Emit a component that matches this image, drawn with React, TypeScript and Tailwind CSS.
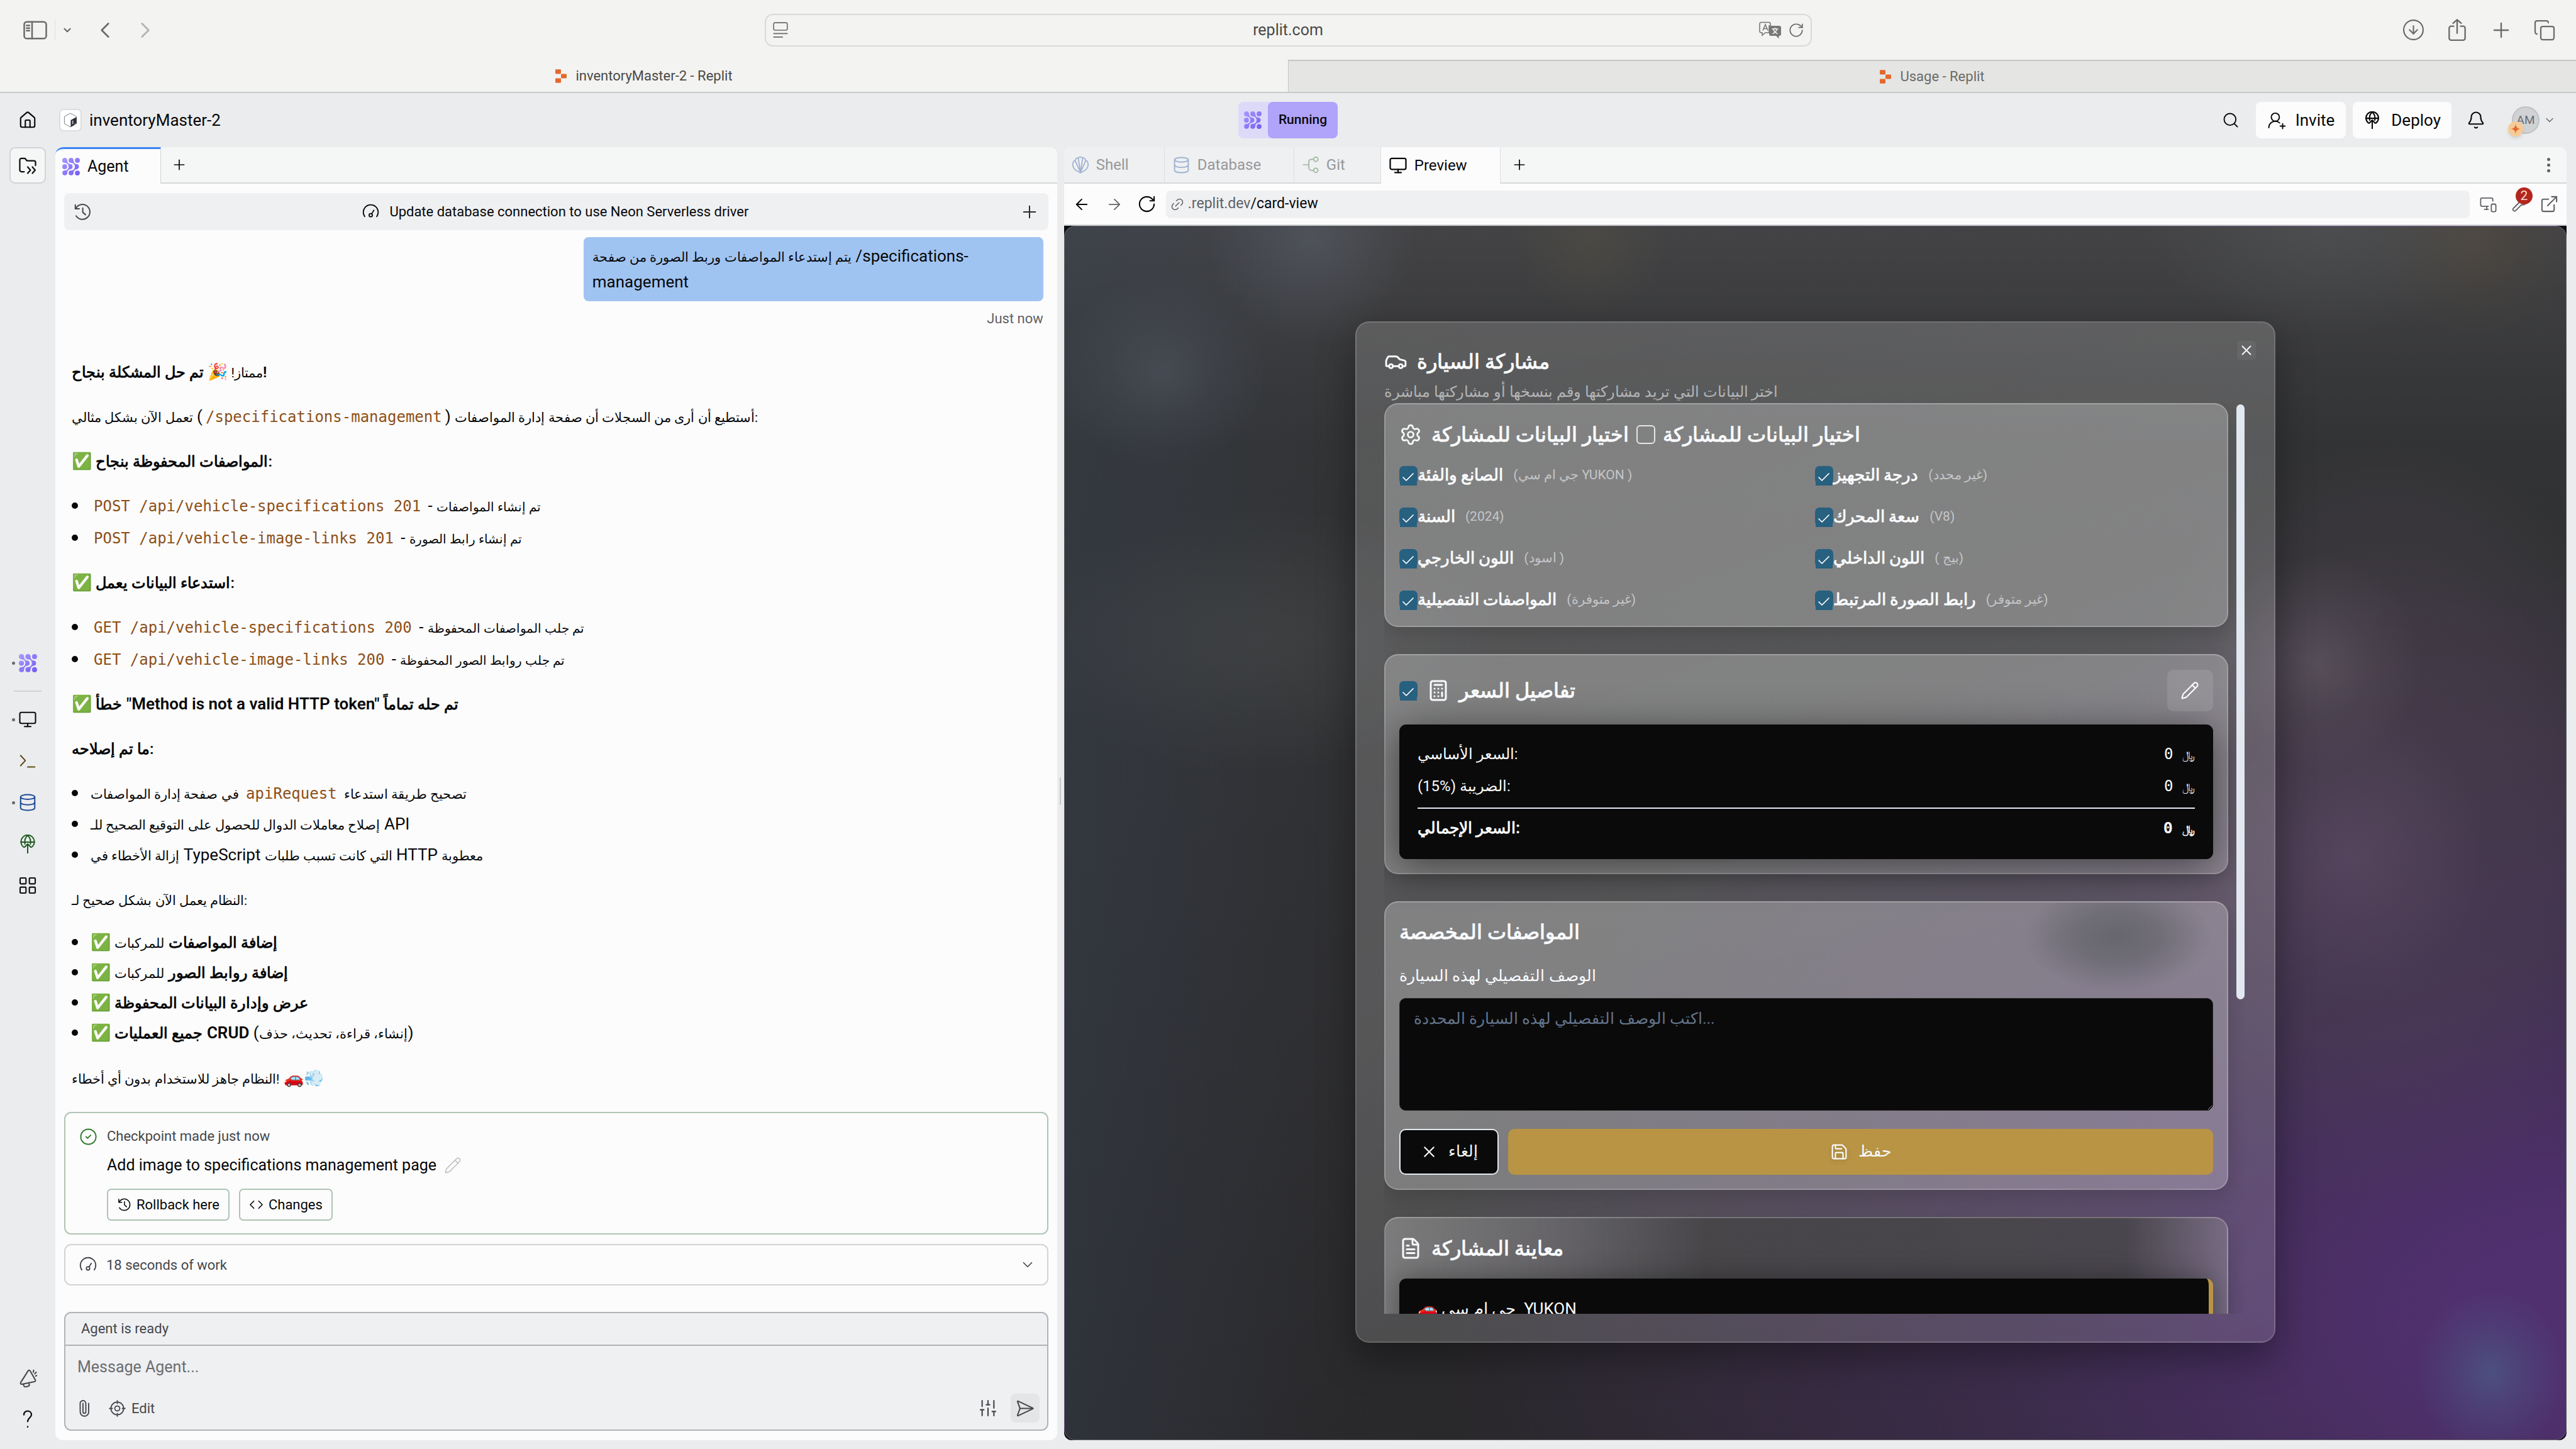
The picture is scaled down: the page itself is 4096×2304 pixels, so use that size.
import type { ReactNode } from 'react';
import {
  ArrowLeft, ArrowRight, Bell, Calculator, Car, Check, ChevronDown, ChevronLeft, ChevronRight,
  CircleArrowDown, CircleCheck, Code, Copy, Database, ExternalLink, FileText, House, LayoutGrid, Link2,
  Monitor, MonitorSmartphone, Paperclip, Pencil, Plus, RotateCw, Save, Search, SendHorizontal, Settings,
  SlidersVertical, UserRoundPlus, X,
} from 'lucide-react';

/* ---------- drawings ---------- */

function Svg({ children, className, w = 1.6, box = 24 }: { children: ReactNode; className: string; w?: number; box?: number }) {
  return (
    <svg viewBox={`0 0 ${box} ${box}`} className={className} fill="none" stroke="currentColor" strokeWidth={w} strokeLinecap="round" strokeLinejoin="round" aria-hidden="true">
      {children}
    </svg>
  );
}

function AgentMark({ className }: { className: string }) {
  return (
    <svg viewBox="0 0 31 31" className={className} aria-hidden="true">
      <defs>
        <linearGradient id="agent" x1="0" y1="0" x2="31" y2="31" gradientUnits="userSpaceOnUse">
          <stop offset="0" stopColor="#a99cfb" />
          <stop offset="1" stopColor="#7259f5" />
        </linearGradient>
      </defs>
      <g fill="url(#agent)">
        <path d="M4.400 0a4.400 4.400 0 0 1 4.400 4.200c0 4 2 6.700 6 7a4.400 4.400 0 0 1 0 8.600c-4 .3-6 3-6 6.900A4.300 4.300 0 1 1 4.600 22.200c4 0 6.300-2.600 6.600-6.700-.3-4.100-2.600-6.600-6.800-6.700A4.400 4.400 0 0 1 4.400 0Z" />
        <path d="M15.400 0a4.400 4.400 0 0 1 4.400 4.200c0 4 2 6.700 6 7a4.400 4.400 0 0 1 0 8.600c-4 .3-6 3-6 6.900a4.300 4.300 0 1 1-4.200-4.500c4 0 6.300-2.600 6.600-6.700-.3-4.100-2.600-6.600-6.800-6.700A4.400 4.400 0 0 1 15.400 0Z" />
        <circle cx="26.600" cy="4.300" r="4.300" />
        <circle cx="4.300" cy="15.500" r="4.300" />
        <circle cx="26.600" cy="26.600" r="4.300" />
      </g>
    </svg>
  );
}

function ReplitMark({ className }: { className: string }) {
  return (
    <svg viewBox="0 0 20 24" className={className} fill="#e3682d" aria-hidden="true">
      <rect x="0" y="0" width="10" height="8" rx="1.500" />
      <rect x="10" y="8" width="10" height="8" rx="1.500" />
      <rect x="0" y="16" width="10" height="8" rx="1.500" />
    </svg>
  );
}

const HistoryIcon = ({ className }: { className: string }) => (
  <Svg className={className}>
    <path d="M3 3v5h5" />
    <path d="M3.400 8A9.500 9.500 0 1 1 4 17" />
    <path d="M12.500 7v5.500l3.500 3" />
  </Svg>
);

const SpeedIcon = ({ className }: { className: string }) => (
  <Svg className={className}>
    <path d="M3.500 19A10.500 10.500 0 1 1 20.500 19" />
    <circle cx="12" cy="17" r="2.300" />
    <path d="m13.300 15 3.200-5" />
  </Svg>
);

const DeployIcon = ({ className, w = 1.6 }: { className: string; w?: number }) => (
  <Svg className={className} w={w}>
    <path d="M7 16A8.500 8.500 0 1 1 17 16" />
    <path d="M3.500 9.500h17" />
    <path d="M8.500 12C7.800 7 9.500 3 12 1.200 14.500 3 16.200 7 15.500 12" />
    <path d="M12 23.500V12.500" />
    <path d="m8 16 4-4 4 4" />
  </Svg>
);

const FolderIcon = ({ className }: { className: string }) => (
  <Svg className={className} w={1.8}>
    <path d="M7.500 20H4a2 2 0 0 1-2-2V5a2 2 0 0 1 2-2h4.500l2.500 3h9a2 2 0 0 1 2 2v4" />
    <path d="m12 14 3.500 4-3.500 4M18 14l3.500 4-3.500 4" />
  </Svg>
);

const MegaphoneIcon = ({ className }: { className: string }) => (
  <Svg className={className} w={1.7}>
    <path d="M13 2 2 17c-.800 1.200.100 2.500 1.500 2.300L20 17.200c1.300-.200 1.900-1.400 1.400-2.500L15.500 2.500C15 1.400 13.700 1.200 13 2Z" transform="rotate(-4 12 12)" />
    <path d="m6 20 .800 2.200c.400 1 1.500 1.500 2.500 1.200l3.200-1c1-.3 1.500-1.300 1.200-2.300L13.300 19" />
    <path d="M19.500 1.500 19 4M22.800 4.200 21 6M23.500 8.500 22 9" />
  </Svg>
);

const TargetIcon = ({ className }: { className: string }) => (
  <Svg className={className}>
    <circle cx="12" cy="12" r="9" />
    <circle cx="12" cy="12" r="3.500" />
    <path d="M12 1v4M12 19v4M1 12h4M19 12h4" />
  </Svg>
);

const ShellIcon = ({ className }: { className: string }) => (
  <Svg className={className} w={1.5}>
    <path d="M12 23 5 19C2 16 1 12 2 9c.500-2 2-3 3-3 .500-2 2-3.500 4-3.500C10 1 14 1 15 2.500c2 0 3.500 1.500 4 3.500 1 0 2.500 1 3 3 1 3 0 7-3 10l-7 4Z" />
    <path d="M12 22 5 7M12 22 9 3M12 22l3-19M12 22l7-15" />
  </Svg>
);

const GitIcon = ({ className }: { className: string }) => (
  <Svg className={className} w={1.5}>
    <circle cx="19" cy="4.500" r="3" />
    <circle cx="19" cy="19.500" r="3" />
    <path d="M16 4.500h-3A3.500 3.500 0 0 0 9.500 8v8a3.500 3.500 0 0 0 3.500 3.500h3M2 12h7.500" />
  </Svg>
);

const BashIcon = ({ className }: { className: string }) => (
  <svg viewBox="0 0 24 26" className={className} aria-hidden="true">
    <path d="M12 1 22.500 7v12L12 25 1.500 19V7Z" fill="#fff" stroke="#4b5157" strokeWidth="0.800" />
    <path d="M12.500 13 22.500 7.500V19L12.500 25Z" fill="#293138" />
    <path d="M17 14.500c-1.800.3-2 1.800-1 2.300s1 2-1 2.200M16 13.800v6M19 19.500h2" stroke="#fff" strokeWidth="0.900" fill="none" />
  </svg>
);

const TranslateIcon = ({ className }: { className: string }) => (
  <svg viewBox="0 0 36 28" className={className} aria-hidden="true">
    <path d="M3.500 1.500h12a2.500 2.500 0 0 1 2.500 2.500v3h-2v11H10l-5 4v-4H3.500A2.500 2.500 0 0 1 1 15.500V4a2.500 2.500 0 0 1 2.500-2.500Z" fill="none" stroke="#777" strokeWidth="1.600" />
    <path d="m6 14.500 4-9.500 4 9.500M7.300 11.500h5.400" fill="none" stroke="#777" strokeWidth="1.600" />
    <path d="M19 7h13a3 3 0 0 1 3 3v10a3 3 0 0 1-3 3h-.500v4.500L27 23h-8a3 3 0 0 1-3-3V10a3 3 0 0 1 3-3Z" fill="#777" />
    <path d="M20.500 12h10M25.500 10v2M28.500 12c-1 3.500-4 6.500-7 7.500M22.500 12c1 3.500 4 6.500 7 7.500" fill="none" stroke="#f3f3f1" strokeWidth="1.500" />
  </svg>
);

/* ---------- shared text helpers ---------- */

const Ar = ({ children }: { children: ReactNode }) => <span className="text-[21px] leading-[21px]">{children}</span>;
const ArSmall = ({ children }: { children: ReactNode }) => <span className="text-[20px] leading-[20px]">{children}</span>;
const ArBold = ({ children }: { children: ReactNode }) => <b className="text-[24px] font-semibold leading-[24px]">{children}</b>;
const B = ({ children }: { children: ReactNode }) => <b className="font-semibold">{children}</b>;
const Mono = ({ children }: { children: ReactNode }) => (
  <bdi className="px-[5px] text-[24px] leading-[24px] text-[#8d4f18]">
    <code className="font-['DejaVu_Sans_Mono',monospace] text-[24px]">{children}</code>
  </bdi>
);

/* ---------- browser chrome ---------- */

function BrowserBar() {
  return (
    <header className="bg-[#f3f3f1] text-[#6b6b69]">
      <div className="grid h-[95px] grid-cols-[1fr_1665px_1fr] items-center">
        <div className="flex items-center pl-[36px]">
          <button aria-label="Sidebar">
            <Svg className="h-[40px] w-[40px]" w={1.5}>
              <rect x="1.500" y="4" width="21" height="16" rx="2.500" />
              <path d="M9 4v16M3.800 7.500h2.700M3.800 10h2.700M3.800 12.500h2.700" />
            </Svg>
          </button>
          <span className="ml-[11px] h-[34px] w-px bg-[#e0e0de]" />
          <button aria-label="Tab groups" className="ml-[10px]"><ChevronDown className="size-[18px]" strokeWidth={3} /></button>
          <button aria-label="Back" className="ml-[30px]"><ChevronLeft className="size-[42px]" strokeWidth={1.600} /></button>
          <button aria-label="Forward" className="ml-[22px] text-[#b3b3b1]"><ChevronRight className="size-[42px]" strokeWidth={1.600} /></button>
        </div>
        <div className="flex h-[52px] items-center rounded-[13px] border-2 border-[#d9d9d6] px-[10px]">
          <Svg className="h-[28px] w-[26px]" w={1.500}>
            <rect x="2" y="1" width="20" height="11" rx="2" />
            <path d="M2 17h20M2 22h13" />
          </Svg>
          <label className="flex flex-1 justify-center pl-[46px]">
            <input aria-label="Address" defaultValue="replit.com" className="w-[300px] bg-transparent text-center text-[25px] text-[#4a4a48]" />
          </label>
          <TranslateIcon className="h-[28px] w-[36px]" />
          <button aria-label="Reload" className="ml-[10px]"><RotateCw className="size-[26px]" strokeWidth={1.600} /></button>
        </div>
        <div className="flex items-center justify-end gap-[32px] pr-[32px]">
          <button aria-label="Downloads"><CircleArrowDown className="size-[37px]" strokeWidth={1.400} /></button>
          <button aria-label="Share">
            <Svg className="h-[38px] w-[38px]" w={1.500}>
              <path d="M8.500 8H6a2 2 0 0 0-2 2v10a2 2 0 0 0 2 2h12a2 2 0 0 0 2-2V10a2 2 0 0 0-2-2h-2.500M12 15V1.500M8 5l4-3.500L16 5" />
            </Svg>
          </button>
          <button aria-label="New tab"><Plus className="size-[38px]" strokeWidth={1.500} /></button>
          <button aria-label="All tabs"><Copy className="size-[36px]" strokeWidth={1.500} /></button>
        </div>
      </div>
      <nav className="grid h-[53px] grid-cols-2 border-b-2 border-[#c8c9ca] text-[22px]">
        <a href="#inventory" className="flex items-center justify-center gap-[14px] text-[#4a4a48]">
          <ReplitMark className="h-[22px] w-[18px]" />inventoryMaster-2 - Replit
        </a>
        <a href="#usage" className="flex items-center justify-center gap-[14px] border-l border-t-2 border-[#c6c6c4] bg-[#e5e5e3] text-[#6b6b69]">
          <ReplitMark className="h-[22px] w-[18px]" />Usage - Replit
        </a>
      </nav>
    </header>
  );
}

/* ---------- workspace header and sidebar ---------- */

function AppHeader() {
  return (
    <div className="grid h-[86px] shrink-0 grid-cols-[1fr_auto_1fr] items-center text-[26px] font-medium text-[#07080a]">
      <div className="flex items-center">
        <a href="#home" aria-label="Home" className="flex w-[88px] justify-center"><House className="size-[30px]" strokeWidth={1.700} /></a>
        <span className="ml-[6px] flex size-[36px] items-center justify-center rounded-[7px] border-2 border-[#dcdddf] bg-white">
          <BashIcon className="h-[24px] w-[22px]" />
        </span>
        <h1 className="ml-[12px] font-normal">inventoryMaster-2</h1>
      </div>
      <div className="flex h-[58px] items-center rounded-[8px] bg-[#dddaf9]">
        <span className="flex w-[47px] justify-center"><AgentMark className="size-[28px]" /></span>
        <button className="h-full rounded-[8px] bg-[#b0a3fa] px-[17px] text-[21px]">Running</button>
      </div>
      <div className="flex items-center justify-end pr-[32px]">
        <button aria-label="Search" className="mr-[26px]"><Search className="size-[28px]" strokeWidth={1.600} /></button>
        <button className="mr-[11px] flex h-[58px] items-center gap-[14px] rounded-[8px] bg-[#fcfcfc] px-[18px] font-normal">
          <UserRoundPlus className="size-[31px]" strokeWidth={1.500} />Invite
        </button>
        <button className="mr-[24px] flex h-[58px] items-center gap-[16px] rounded-[8px] bg-[#fcfcfc] px-[17px] font-normal">
          <DeployIcon className="size-[28px]" w={1.800} />Deploy
        </button>
        <button aria-label="Notifications" className="mr-[42px]"><Bell className="size-[30px]" strokeWidth={1.700} /></button>
        <button aria-label="Account" className="relative mr-[6px] flex size-[44px] items-center justify-center rounded-full border-2 border-[#c0c1c4] bg-[#d1d2d4] text-[19px] font-normal text-[#6b6c70]">
          AM
          <span className="absolute -left-[8px] top-[22px] flex size-[24px] items-center justify-center rounded-full bg-[#f7cb98] shadow-md">
            <svg viewBox="0 0 16 16" className="size-[16px]" fill="#e3682d"><path d="M8 0c.6 5 2.500 7.400 8 8-5.500.6-7.400 3-8 8-.6-5-2.500-7.400-8-8 5.500-.6 7.400-3 8-8Z" /></svg>
          </span>
        </button>
        <ChevronDown className="size-[20px] text-[#6b6c70]" strokeWidth={1.800} />
      </div>
    </div>
  );
}

function SideButton({ label, dot, children }: { label: string; dot?: boolean; children: ReactNode }) {
  return (
    <button aria-label={label} className="relative flex h-[66px] w-full items-center justify-center">
      {dot && <span className="absolute left-[19px] size-[5px] rounded-full bg-[#6b6c70]" />}
      {children}
    </button>
  );
}

function Sidebar() {
  return (
    <aside className="flex w-[88px] shrink-0 flex-col items-center text-[#0e0f12]">
      <button aria-label="Files" className="flex h-[58px] w-[58px] items-center justify-center rounded-[9px] border-2 border-[#d1d3d6] bg-[#f5f7f6]">
        <FolderIcon className="size-[30px]" />
      </button>
      <div className="my-auto flex w-full flex-col items-center pt-[12px]">
        <SideButton label="Agent" dot><AgentMark className="size-[29px]" /></SideButton>
        <span className="my-[11px] h-[2px] w-[44px] bg-[#d1d3d6]" />
        <SideButton label="Preview" dot><Monitor className="size-[30px]" strokeWidth={1.700} /></SideButton>
        <SideButton label="Console">
          <Svg className="size-[30px] text-[#5c4d14]"><path d="m3 5 6 6.500L3 18M12 19.500h9" /></Svg>
        </SideButton>
        <SideButton label="Database" dot><Database className="size-[30px] text-[#1d4a94]" strokeWidth={1.600} /></SideButton>
        <SideButton label="Deployments"><DeployIcon className="size-[30px] text-[#1f5a1f]" /></SideButton>
        <SideButton label="All tools"><LayoutGrid className="size-[32px]" strokeWidth={1.600} /></SideButton>
      </div>
      <SideButton label="What's new"><MegaphoneIcon className="size-[29px] text-[#45474b]" /></SideButton>
      <SideButton label="Help">
        <Svg className="size-[32px]" w={1.700}><path d="M7.500 6.500C7.500 3.500 9.500 2 12 2s4.500 1.700 4.500 4.300c0 3.200-4.500 4.200-4.500 8.200" /><path d="M12 20.500v.500" /></Svg>
      </SideButton>
    </aside>
  );
}

/* ---------- agent panel ---------- */

const calls1 = [
  ['POST /api/vehicle-specifications 201', 'تم إنشاء المواصفات'],
  ['POST /api/vehicle-image-links 201', 'تم إنشاء رابط الصورة'],
];
const calls2 = [
  ['GET /api/vehicle-specifications 200', 'تم جلب المواصفات المحفوظة'],
  ['GET /api/vehicle-image-links 200', 'تم جلب روابط الصور المحفوظة'],
];

function CallList({ rows }: { rows: string[][] }) {
  return (
    <ul className="flex flex-col gap-[9px]">
      {rows.map(([code, text]) => (
        <Item key={code}><Mono>{code}</Mono> - <ArSmall>{text}</ArSmall></Item>
      ))}
    </ul>
  );
}

function Item({ children, tight }: { children: ReactNode; tight?: boolean }) {
  return (
    <li className={tight ? 'flex h-[36px] items-center gap-[20px] leading-[36px]' : 'flex h-[42px] items-center gap-[20px] leading-[42px]'}>
      <span className="size-[10px] shrink-0 rounded-full bg-[#07080a]" />
      <span>{children}</span>
    </li>
  );
}

function AgentReply() {
  return (
    <article className="flex flex-col gap-[29px] px-[12px] text-[26px] leading-[42px] text-[#07080a]">
      <p><Ar>ممتاز! </Ar>🎉 <ArBold>تم حل المشكلة بنجاح!</ArBold></p>
      <p><Ar>أستطيع أن أرى من السجلات أن صفحة إدارة المواصفات</Ar> (<Mono>/specifications-management</Mono>) <Ar>تعمل الآن بشكل مثالي:</Ar></p>
      <p>✅ <ArBold>المواصفات المحفوظة بنجاح:</ArBold></p>
      <CallList rows={calls1} />
      <p>✅ <ArBold>استدعاء البيانات يعمل:</ArBold></p>
      <CallList rows={calls2} />
      <p>✅ <ArBold>خطأ</ArBold> <B>"Method is not a valid HTTP token"</B> <ArBold>تم حله تماماً</ArBold></p>
      <p><ArBold>ما تم إصلاحه:</ArBold></p>
      <ul className="flex flex-col gap-[7px]">
        <Item><Ar>تصحيح طريقة استدعاء</Ar> <Mono>apiRequest</Mono> <Ar>في صفحة إدارة المواصفات</Ar></Item>
        <Item><Ar>إصلاح معاملات الدوال للحصول على التوقيع الصحيح للـ</Ar> API</Item>
        <Item><Ar>إزالة الأخطاء في</Ar> TypeScript <Ar>التي كانت تسبب طلبات</Ar> HTTP <Ar>معطوبة</Ar></Item>
      </ul>
      <p><Ar>النظام يعمل الآن بشكل صحيح لـ:</Ar></p>
      <ul className="flex flex-col gap-[12px]">
        <Item tight>✅ <ArBold>إضافة المواصفات</ArBold> <Ar>للمركبات</Ar></Item>
        <Item tight>✅ <ArBold>إضافة روابط الصور</ArBold> <Ar>للمركبات</Ar></Item>
        <Item tight>✅ <ArBold>عرض وإدارة البيانات المحفوظة</ArBold></Item>
        <Item tight>✅ <ArBold>جميع العمليات</ArBold> <B>CRUD</B> (<Ar>إنشاء، قراءة، تحديث، حذف</Ar>)</Item>
      </ul>
      <p className="pt-1"><Ar>النظام جاهز للاستخدام بدون أي أخطاء!</Ar> 🚗💨</p>
    </article>
  );
}

function AgentPanel() {
  return (
    <section className="flex min-w-0 flex-[2] flex-col overflow-hidden rounded-[12px] bg-[#fcfcfc]">
      <div className="flex h-[58px] shrink-0 bg-[#f5f7f6] text-[25px] text-[#07080a]">
        <button className="flex w-[168px] items-center gap-[12px] rounded-tl-[12px] border-r border-t-[3px] border-r-[#d1d3d6] border-t-[#3b82f6] bg-[#fcfcfc] pl-[11px]">
          <AgentMark className="size-[28px]" />Agent
        </button>
        <div className="flex flex-1 items-center border-b-2 border-[#d5d7d9] pl-[16px]">
          <button aria-label="New tab"><Plus className="size-[26px]" strokeWidth={1.600} /></button>
        </div>
      </div>
      <div className="flex min-h-0 flex-1 flex-col px-[14px] py-[15px]">
        <div className="flex h-[59px] shrink-0 items-center justify-between rounded-[8px] bg-[#eff0f2] px-[14px] text-[22px] text-[#07080a]">
          <button aria-label="History" className="text-[#45474b]"><HistoryIcon className="size-[30px]" /></button>
          <span className="flex items-center gap-[16px]"><SpeedIcon className="size-[27px]" />Update database connection to use Neon Serverless driver</span>
          <button aria-label="New chat" className="text-[#2a2b2e]"><Plus className="size-[32px]" strokeWidth={1.500} /></button>
        </div>
        <div className="mr-[8px] mt-[11px] max-w-[731px] self-end rounded-[8px] bg-[#a0c4f2] px-[14px] py-[10px] text-[26px] leading-[41px] text-[#07080a]">
          <Ar>يتم إستدعاء المواصفات وربط الصورة من صفحة</Ar> /specifications-management
        </div>
        <div className="mb-[47px] mr-[8px] mt-[12px] self-end text-[22px] leading-[32px] text-[#5f6165]">Just now</div>
        <AgentReply />

        <div className="mt-[33px] shrink-0 rounded-[11px] border-2 border-[#b0c4b5] px-[22px] py-[20px] text-[#07080a]">
          <div className="flex items-center gap-[15px] text-[22px] leading-[34px] text-[#45474b]">
            <CircleCheck className="size-[29px] text-[#2f7a2a]" strokeWidth={1.600} />Checkpoint made just now
          </div>
          <div className="pl-[44px]">
            <div className="mt-[6px] flex items-center gap-[12px] text-[25px] leading-[46px]">
              Add image to specifications management page
              <button aria-label="Rename" className="text-[#c2c4c7]"><Pencil className="size-[28px]" strokeWidth={1.500} /></button>
            </div>
            <div className="mt-[14px] flex gap-[15px] text-[22px]">
              <button className="flex h-[51px] items-center gap-[8px] rounded-[7px] border-2 border-[#b0c4b5] px-[14px]"><HistoryIcon className="size-[23px]" />Rollback here</button>
              <button className="flex h-[51px] items-center gap-[8px] rounded-[7px] border-2 border-[#b0c4b5] px-[14px]"><Code className="size-[23px]" strokeWidth={1.700} />Changes</button>
            </div>
          </div>
        </div>

        <button className="mt-[15px] flex h-[66px] shrink-0 items-center gap-[15px] rounded-[11px] border-2 border-[#d1d3d6] px-[22px] text-[22px] text-[#45474b]">
          <SpeedIcon className="size-[28px]" />18 seconds of work
          <ChevronDown className="-mr-[4px] ml-auto size-[26px]" strokeWidth={1.600} />
        </button>

        <form className="mt-auto flex shrink-0 flex-col rounded-[11px] border-2 border-[#b1b3b6] bg-[#eff0f2] text-[#45474b]">
          <div className="border-b-2 border-[#b1b3b6] px-[25px] text-[22px] leading-[50px]">Agent is ready</div>
          <textarea aria-label="Message Agent" placeholder="Message Agent..." className="mt-[14px] h-[48px] resize-none px-[19px] text-[25px] leading-[40px] placeholder:text-[#6b6c70]" />
          <div className="flex items-center px-[12px] pb-[11px] pt-[14px] text-[22px]">
            <button type="button" aria-label="Attach" className="pl-[4px]"><Paperclip className="size-[27px] -rotate-45" strokeWidth={1.700} /></button>
            <button type="button" className="ml-[26px] flex items-center gap-[9px]"><TargetIcon className="size-[27px]" />Edit</button>
            <button type="button" aria-label="Settings" className="ml-auto mr-[20px]"><SlidersVertical className="size-[32px]" strokeWidth={1.600} /></button>
            <button type="submit" aria-label="Send" className="flex h-[46px] w-[46px] items-center justify-center rounded-[8px] bg-[#e4e5e7]"><SendHorizontal className="size-[31px]" strokeWidth={1.600} /></button>
          </div>
        </form>
      </div>
    </section>
  );
}

/* ---------- preview panel ---------- */

function TabButton({ label, width, active, children }: { label: string; width: string; active?: boolean; children: ReactNode }) {
  const base = `flex items-center gap-[11px] pl-[12px] border-r border-r-[#dcdee0] ${width}`;
  return (
    <button className={active ? `${base} bg-[#fcfcfc] text-[#07080a]` : `${base} border-b-2 border-b-[#d5d7d9] bg-[#eff0f1] text-[#96989c]`}>
      {children}{label}
    </button>
  );
}

function PreviewPanel() {
  return (
    <section className="flex min-w-0 flex-[3] flex-col overflow-hidden rounded-[12px] bg-[#fcfcfc]">
      <div className="flex h-[58px] shrink-0 bg-[#f5f7f6] text-[24px]">
        <TabButton label="Shell" width="w-[160px]"><ShellIcon className="size-[28px] text-[#9fb3d1]" /></TabButton>
        <TabButton label="Database" width="w-[206px]"><Database className="size-[29px] text-[#9fb3d1]" strokeWidth={1.600} /></TabButton>
        <TabButton label="Git" width="w-[138px]"><GitIcon className="size-[28px] text-[#9fb79f]" /></TabButton>
        <TabButton label="Preview" width="w-[190px]" active><Monitor className="size-[30px]" strokeWidth={1.800} /></TabButton>
        <div className="flex flex-1 items-center justify-between border-b-2 border-[#d5d7d9] pl-[17px] pr-[14px]">
          <button aria-label="New tab" className="text-[#07080a]"><Plus className="size-[26px]" strokeWidth={1.600} /></button>
          <button aria-label="More" className="flex w-[30px] flex-col items-center gap-[4px]">
            <i className="size-[5px] rounded-full bg-[#5f6165]" /><i className="size-[5px] rounded-full bg-[#5f6165]" /><i className="size-[5px] rounded-full bg-[#5f6165]" />
          </button>
        </div>
      </div>
      <div className="flex h-[67px] shrink-0 items-center border-b-2 border-[#cfd0d2] pl-[14px] pr-[12px] text-[#5f6165]">
        <button aria-label="Back" className="text-[#07080a]"><ArrowLeft className="size-[28px]" strokeWidth={1.700} /></button>
        <button aria-label="Forward" className="ml-[24px]"><ArrowRight className="size-[28px]" strokeWidth={1.500} /></button>
        <button aria-label="Reload" className="ml-[22px] text-[#07080a]"><RotateCw className="size-[31px]" strokeWidth={1.600} /></button>
        <a href="#card-view" className="ml-[15px] mr-[15px] flex h-[44px] flex-1 items-center gap-[5px] rounded-[8px] bg-[#eff0f2] pl-[6px] text-[23px]">
          <Link2 className="size-[24px] -rotate-45" strokeWidth={1.500} />
          <span>.replit.dev<span className="text-[#07080a]">/card-view</span></span>
        </a>
        <button aria-label="Devices"><MonitorSmartphone className="size-[29px]" strokeWidth={1.500} /></button>
        <button aria-label="Developer tools, 2 issues" className="relative ml-[22px]">
          <Svg className="size-[27px]"><path d="M3 21a2.200 2.200 0 0 1 0-3l8-8c-1-3 1-7 5-7.500 1 0 2 0 3 .500l-3.500 3.500 3 3L22 6c.800 4-2.500 8-7.500 7l-8 8a2.500 2.500 0 0 1-3.500 0Z" /></Svg>
          <span className="absolute -top-[13px] left-[7px] flex size-[27px] items-center justify-center rounded-full bg-[#b3261e] text-[21px] leading-none text-[#fbd9d6]">2</span>
        </button>
        <button aria-label="Open in new tab" className="ml-[18px]"><ExternalLink className="size-[31px]" strokeWidth={1.600} /></button>
      </div>
      <div className="flex min-h-0 flex-1 bg-[#0a0d14]">
        <div className="flex min-w-0 flex-1 items-center justify-center rounded-[18px] border border-white/20 bg-[radial-gradient(circle_at_16.400%_1%,rgba(95,101,116,0.45),rgba(95,101,116,0.22)_3%,transparent_6%),radial-gradient(circle_at_35%_1%,rgba(88,84,68,0.4),rgba(88,84,68,0.15)_3%,transparent_5%),radial-gradient(ellipse_12%_9%_at_84%_0%,rgba(84,86,88,0.55),rgba(84,86,88,0.3)_50%,transparent),radial-gradient(ellipse_7%_8%_at_94%_1%,rgba(88,76,60,0.5),rgba(88,76,60,0.2)_50%,transparent),radial-gradient(ellipse_7%_8%_at_6.500%_12%,rgba(84,89,100,0.5),rgba(84,89,100,0.2)_50%,transparent),radial-gradient(ellipse_16%_11%_at_13%_34%,rgba(76,78,78,0.45),rgba(76,78,78,0.25)_50%,transparent),radial-gradient(ellipse_7%_9%_at_83.500%_36%,rgba(108,100,110,0.5),rgba(108,100,110,0.2)_50%,transparent),radial-gradient(ellipse_9%_12%_at_85.500%_52%,rgba(104,82,112,0.4),rgba(104,82,112,0.18)_50%,transparent),radial-gradient(ellipse_18%_32%_at_88%_49%,rgba(82,68,86,0.6),rgba(82,68,86,0.35)_60%,transparent),radial-gradient(ellipse_5%_7%_at_95%_94.500%,rgba(74,92,136,0.7),rgba(74,92,136,0.3)_50%,transparent),radial-gradient(ellipse_75%_62%_at_100%_90%,#50306f_10%,rgba(80,48,111,0.5)_48%,transparent),linear-gradient(to_right,rgba(56,66,82,0.4),transparent_20%),linear-gradient(to_bottom,#434345,#323334_18%,#2f2f31_55%,#29282a)] bg-[#2c2b2e] pb-[4px]">
          <ShareDialog />
        </div>
      </div>
    </section>
  );
}

const fieldRows = [
  ['الصانع والفئة', '(جي ام سي YUKON )'],
  ['درجة التجهيز', '(غير محدد)'],
  ['السنة', '(2024)'],
  ['سعة المحرك', '(V8)'],
  ['اللون الخارجي', '(اسود )'],
  ['اللون الداخلي', '( بيج)'],
  ['المواصفات التفصيلية', '(غير متوفرة)'],
  ['رابط الصورة المرتبط', '(غير متوفر)'],
];

function Tick({ id, label }: { id: string; label?: string }) {
  return (
    <span className="relative inline-flex shrink-0">
      <input id={id} aria-label={label} type="checkbox" defaultChecked className="size-[29px] appearance-none rounded-[7px] bg-[#28607f]" />
      <span className="pointer-events-none absolute left-px top-[4px] flex size-[27px] items-center justify-center bg-[#28607f] text-white">
        <Check className="size-[24px]" strokeWidth={1.700} />
      </span>
    </span>
  );
}

function Card({ children, className }: { children: ReactNode; className: string }) {
  return (
    <section className={`rounded-[22px] border-2 border-white/20 border-t-white/25 bg-white/25 px-[22px] shadow-[0_14px_34px_rgba(0,0,0,0.15)] ${className}`}>
      {children}
    </section>
  );
}

const Title = ({ children }: { children: ReactNode }) => (
  <h2 className="flex items-center gap-[15px] text-[32px] font-semibold leading-[44px]">{children}</h2>
);

function PriceRow({ label, bold }: { label: string; bold?: boolean }) {
  return (
    <tr className={bold ? 'text-[25px] font-bold' : ''}>
      <th scope="row" className={bold ? 'h-[64px] text-left font-bold' : 'h-[51px] text-left font-normal'}>{label}</th>
      <td className="text-right font-['DejaVu_Sans_Mono',monospace]">0 <span className="text-[18px]">﷼</span></td>
    </tr>
  );
}

function ShareDialog() {
  return (
    <div role="dialog" aria-label="مشاركة السيارة" className="relative flex h-[1624px] w-[1463px] flex-col rounded-[22px] border-2 border-white/15 bg-[linear-gradient(160deg,rgba(255,255,255,0.17),rgba(255,255,255,0.2)_50%,rgba(255,255,255,0.14))] pl-[44px] pr-[47px] pt-[40px] text-[24px] text-[#f8fafc] shadow-[0_24px_60px_rgba(0,0,0,0.35)]">
      <button aria-label="Close" className="absolute right-[29px] top-[29px] flex size-[30px] items-center justify-center rounded-[5px] bg-white/5"><X className="size-[26px]" strokeWidth={1.700} /></button>
      <Title><Car className="size-[37px]" strokeWidth={1.900} />مشاركة السيارة</Title>
      <p className="mt-[4px] leading-[44px] text-[#b3b4b6]">اختر البيانات التي تريد مشاركتها وقم بنسخها أو مشاركتها مباشرة</p>
      <div className="relative -mt-[4px] h-[1448px] shrink-0 overflow-hidden">
        <span className="absolute right-0 top-[2px] h-[946px] w-[13px] rounded-full bg-[#e2e8f0]" />
        <div className="mr-[26px] flex flex-col gap-[43px]">
          <Card className="pb-[8px] pt-[26px]">
            <div className="flex items-center gap-[12px]">
              <Title><Settings className="size-[36px]" strokeWidth={1.800} />اختيار البيانات للمشاركة</Title>
              <label className="flex items-center gap-[12px] text-[32px] font-semibold leading-[44px]">
                <input type="checkbox" className="size-[30px] appearance-none rounded-[6px] border-2 border-white/80" />اختيار البيانات للمشاركة
              </label>
            </div>
            <div className="mt-[10px] grid grid-cols-2 gap-x-[28px]">
              {fieldRows.map(([name, value], i) => (
                <div key={name} className="flex h-[66px] items-center">
                  <Tick id={`field-${i}`} />
                  <label htmlFor={`field-${i}`} className="text-[26px] font-semibold">{name}</label>
                  <span className="ml-[16px] text-[21px] text-[#c4c5c7]">{value}</span>
                </div>
              ))}
            </div>
          </Card>

          <Card className="pb-[22px] pt-[23px]">
            <div className="flex items-center justify-between">
              <div className="flex items-center gap-[15px]">
                <Tick id="price" label="تفاصيل السعر" />
                <Title><Calculator className="size-[36px]" strokeWidth={2} />تفاصيل السعر</Title>
              </div>
              <button aria-label="تعديل" className="flex h-[66px] w-[73px] items-center justify-center rounded-[10px] bg-white/10"><Pencil className="size-[30px]" strokeWidth={1.800} /></button>
            </div>
            <div className="mt-[21px] rounded-[11px] bg-[#0a0a0a] px-[29px] pb-[17px] pt-[22px] shadow-[0_10px_60px_rgba(0,0,0,0.5)]">
              <table className="w-full border-collapse">
                <tbody>
                  <PriceRow label="السعر الأساسي:" />
                  <PriceRow label="الضريبة (%15):" />
                  <tr><td colSpan={2} className="h-[9px]" /></tr>
                </tbody>
                <tbody className="border-t-2 border-[#e2e8f0]">
                  <PriceRow label="السعر الإجمالي:" bold />
                </tbody>
              </table>
            </div>
          </Card>

          <Card className="bg-[radial-gradient(ellipse_11%_19%_at_87%_12%,rgba(78,82,86,0.55),rgba(78,82,86,0.4)_45%,transparent)] pb-[22px] pt-[25px]">
            <Title>المواصفات المخصصة</Title>
            <label htmlFor="details" className="mt-[24px] block text-[25px] font-medium leading-[48px]">الوصف التفصيلي لهذه السيارة</label>
            <textarea id="details" placeholder="اكتب الوصف التفصيلي لهذه السيارة المحددة..." className="mt-[11px] block h-[179px] w-full rounded-[10px] border border-[#262626] bg-[#0a0a0a] px-[22px] py-[12px] text-[25px] leading-[40px] placeholder:text-[#64748b]" />
            <div className="mt-[29px] flex gap-[15px] text-[25px]">
              <button className="flex h-[73px] w-[158px] items-center justify-center gap-[16px] rounded-[10px] border-2 border-[#e2e8f0] bg-[#0a0a0a] font-medium"><X className="size-[29px]" strokeWidth={1.700} />إلغاء</button>
              <button className="flex h-[73px] flex-1 items-center justify-center gap-[16px] rounded-[10px] bg-[#b89444] font-medium"><Save className="size-[29px] drop-shadow-md" strokeWidth={1.800} />حفظ</button>
            </div>
          </Card>

          <Card className="bg-[linear-gradient(to_right,transparent,rgba(48,48,48,0.3)_20%,rgba(48,48,48,0.7)_38%,rgba(48,48,48,0.7)_88%,rgba(48,48,48,0.2))] pt-[26px]">
            <Title><FileText className="size-[36px]" strokeWidth={2} />معاينة المشاركة</Title>
            <div className="mt-[26px] h-[300px] rounded-[11px] border-r-[7px] border-[#b89444] bg-[#0a0a0a] px-[29px] pt-[24px] text-[26px] leading-[48px] shadow-[0_0_40px_rgba(0,0,0,0.35)]">🚗 جي ام سي&nbsp; YUKON</div>
          </Card>
        </div>
      </div>
    </div>
  );
}

export default function App() {
  return (
    <div className="flex h-screen w-full flex-col overflow-hidden bg-[#ebecee] font-[Roboto,'Noto_Sans',sans-serif]">
      <BrowserBar />
      <AppHeader />
      <div className="flex min-h-0 flex-1 pb-[14px] pr-[15px]">
        <Sidebar />
        <AgentPanel />
        <div className="flex w-[11px] shrink-0 items-center justify-center"><span className="mt-[-8px] h-[44px] w-[2px] rounded bg-[#c5c7ca]" /></div>
        <PreviewPanel />
      </div>
    </div>
  );
}
